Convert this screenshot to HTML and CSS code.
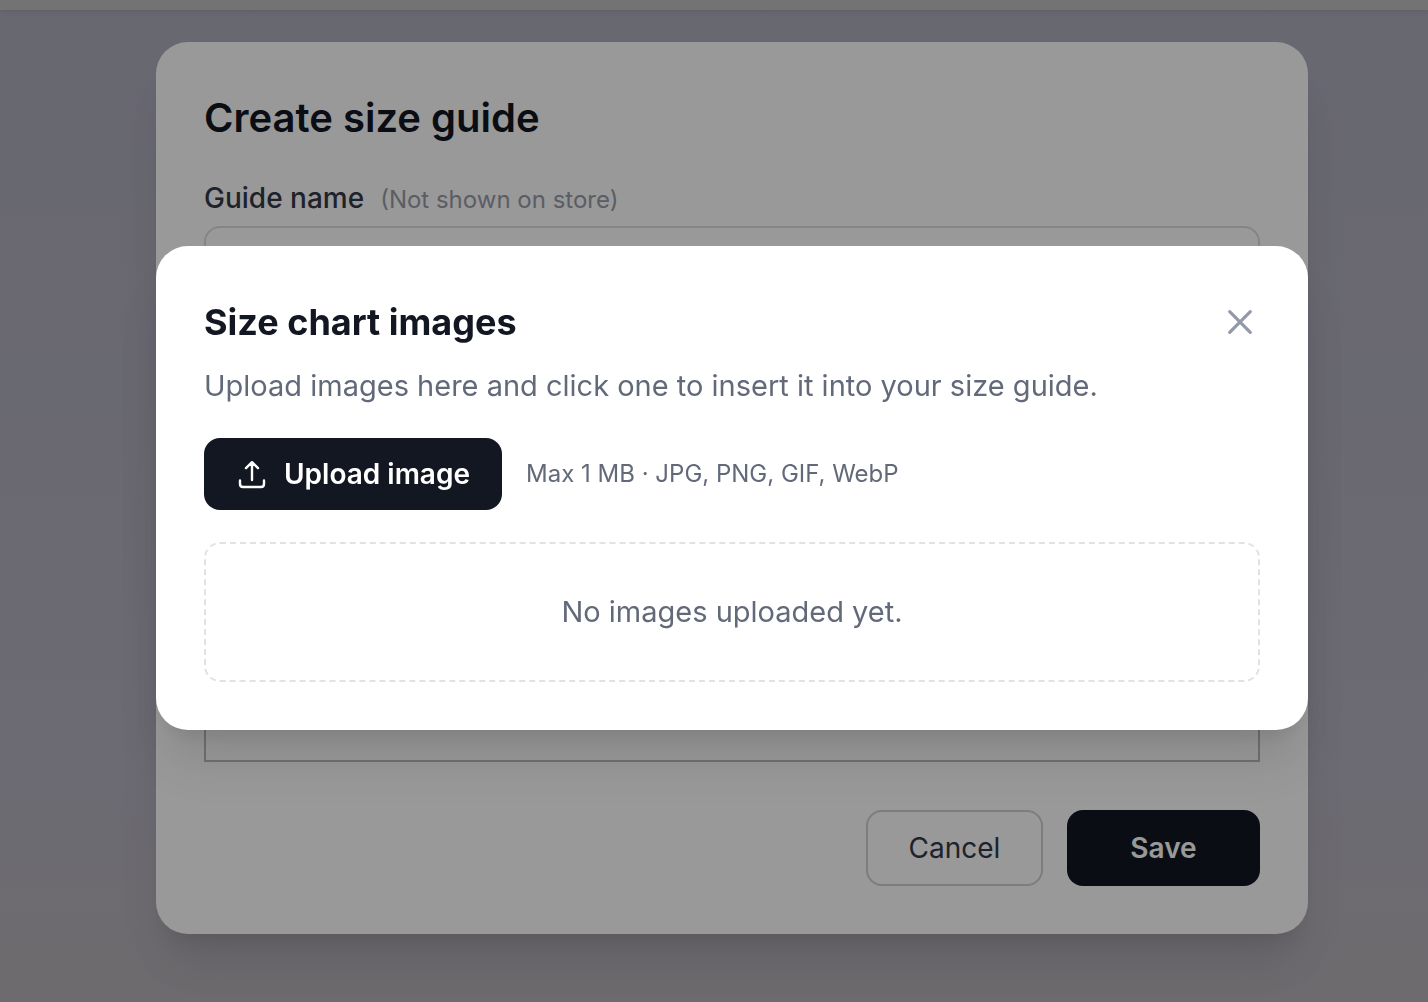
FILE: index.html
```html
<!DOCTYPE html>
<html lang="en">
<head>
<meta charset="utf-8">
<meta name="viewport" content="width=device-width, initial-scale=1">
<title>Create size guide</title>
<link rel="stylesheet" href="styles.css">
</head>
<body>
<div class="page">
  <div class="topbar"></div>
  <main class="stage">
    <form class="dialog editor">
      <h1 class="editor-title">Create size guide</h1>
      <div class="field">
        <label class="label" for="guide-name">Guide name <span class="label-note">(Not shown on store)</span></label>
        <input class="input" id="guide-name" type="text">
      </div>
      <textarea class="content" aria-label="Guide content"></textarea>
      <div class="actions">
        <button class="button button-outline" type="button">Cancel</button>
        <button class="button button-save" type="submit">Save</button>
      </div>
    </form>
    <div class="backdrop"></div>
    <section class="dialog images" role="dialog" aria-modal="true" aria-labelledby="images-title">
      <header class="images-header">
        <h2 class="images-title" id="images-title">Size chart images</h2>
        <button class="close" type="button" aria-label="Close">
          <svg width="40" height="40" viewBox="0 0 40 40" fill="none" stroke="currentColor" stroke-width="3.2" stroke-linecap="round"><path d="M9.7 9.7 30.3 30.3M30.3 9.7 9.7 30.3"/></svg>
        </button>
      </header>
      <p class="text intro">Upload images here and click one to insert it into your size guide.</p>
      <div class="upload-row">
        <button class="button button-upload" type="button">
          <svg width="32" height="32" viewBox="0 0 32 32" fill="none" stroke="currentColor" stroke-width="2.4" stroke-linecap="round" stroke-linejoin="round"><path d="M16 22V4.5M10 10.2 16 4.2 22 10.2M4 22.5V26Q4 29 7 29H25Q28 29 28 26V22.5"/></svg>
          Upload image
        </button>
        <span class="hint">Max 1 MB · JPG, PNG, GIF, WebP</span>
      </div>
      <div class="text empty">No images uploaded yet.</div>
    </section>
  </main>
</div>
</body>
</html>
```
FILE: styles.css
```css
* {
  box-sizing: border-box;
}

body {
  margin: 0;
  font-family: Inter, "Noto Sans", sans-serif;
  font-size: 28px;
  line-height: 40px;
  color: #131722;
}

h1, h2, p {
  margin: 0;
}

button, input, textarea {
  font: inherit;
}

.page {
  display: flex;
  flex-direction: column;
  min-height: 100vh;
  background: linear-gradient(#adadbd, #b4b1bf 75%, #b8b3b9);
}

.topbar {
  height: 10px;
  background: #c0c0c0;
  box-shadow: 0 2px 4px rgba(0, 0, 0, 0.08);
}

.stage {
  display: grid;
  flex: 1;
  align-items: center;
  padding: 32px 120px 68px 156px;
}

.dialog {
  grid-area: 1 / 1;
  padding: 48px;
  border-radius: 32px;
  background: #fff;
  box-shadow: 0 40px 50px -10px rgba(0, 0, 0, 0.1), 0 16px 20px -12px rgba(0, 0, 0, 0.1);
}

.backdrop {
  position: fixed;
  inset: 0;
  background: rgba(0, 0, 0, 0.4);
}

/* Guide editor */
.editor {
  display: flex;
  flex-direction: column;
  gap: 32px;
}

.editor-title {
  font-size: 40px;
  font-weight: 600;
  line-height: 56px;
}

.field {
  display: flex;
  flex-direction: column;
  gap: 8px;
}

.label {
  display: flex;
  align-items: baseline;
  gap: 16px;
  font-weight: 500;
  color: #343a48;
}

.label-note {
  font-size: 24px;
  font-weight: 400;
  line-height: 32px;
  color: #989ca8;
}

.input {
  width: 100%;
  height: 76px;
  padding: 0 24px;
  border: 2px solid #dddde4;
  border-radius: 16px;
  background: #fff;
}

.content {
  width: 100%;
  height: 428px;
  padding: 24px;
  border: 2px solid #bbb;
  resize: none;
}

.actions {
  display: flex;
  justify-content: flex-end;
  gap: 24px;
  padding-top: 16px;
}

.button {
  border: 0;
  border-radius: 16px;
  background: #131722;
  color: #fff;
  font-weight: 600;
}

.button-outline {
  width: 177px;
  height: 76px;
  border: 2px solid #d0d0d8;
  background: #fff;
  color: #343a48;
  font-weight: 400;
}

.button-save {
  width: 193px;
  height: 76px;
}

/* Image picker */
.images {
  position: relative;
}

.images-header {
  display: flex;
  align-items: center;
  justify-content: space-between;
  height: 56px;
}

.images-title {
  font-size: 36px;
  font-weight: 700;
}

.close {
  display: flex;
  padding: 0;
  border: 0;
  background: none;
  color: #9299a8;
}

.text {
  font-size: 29px;
  color: #626979;
}

.intro {
  margin: 16px 0 32px;
}

.upload-row {
  display: flex;
  align-items: center;
  gap: 24px;
}

.button-upload {
  display: flex;
  align-items: center;
  gap: 16px;
  height: 72px;
  padding: 0 32px;
}

.hint {
  font-size: 24px;
  color: #626979;
}

.empty {
  display: flex;
  align-items: center;
  justify-content: center;
  height: 140px;
  margin-top: 32px;
  border: 2px dashed #e1e1e7;
  border-radius: 16px;
}
```
